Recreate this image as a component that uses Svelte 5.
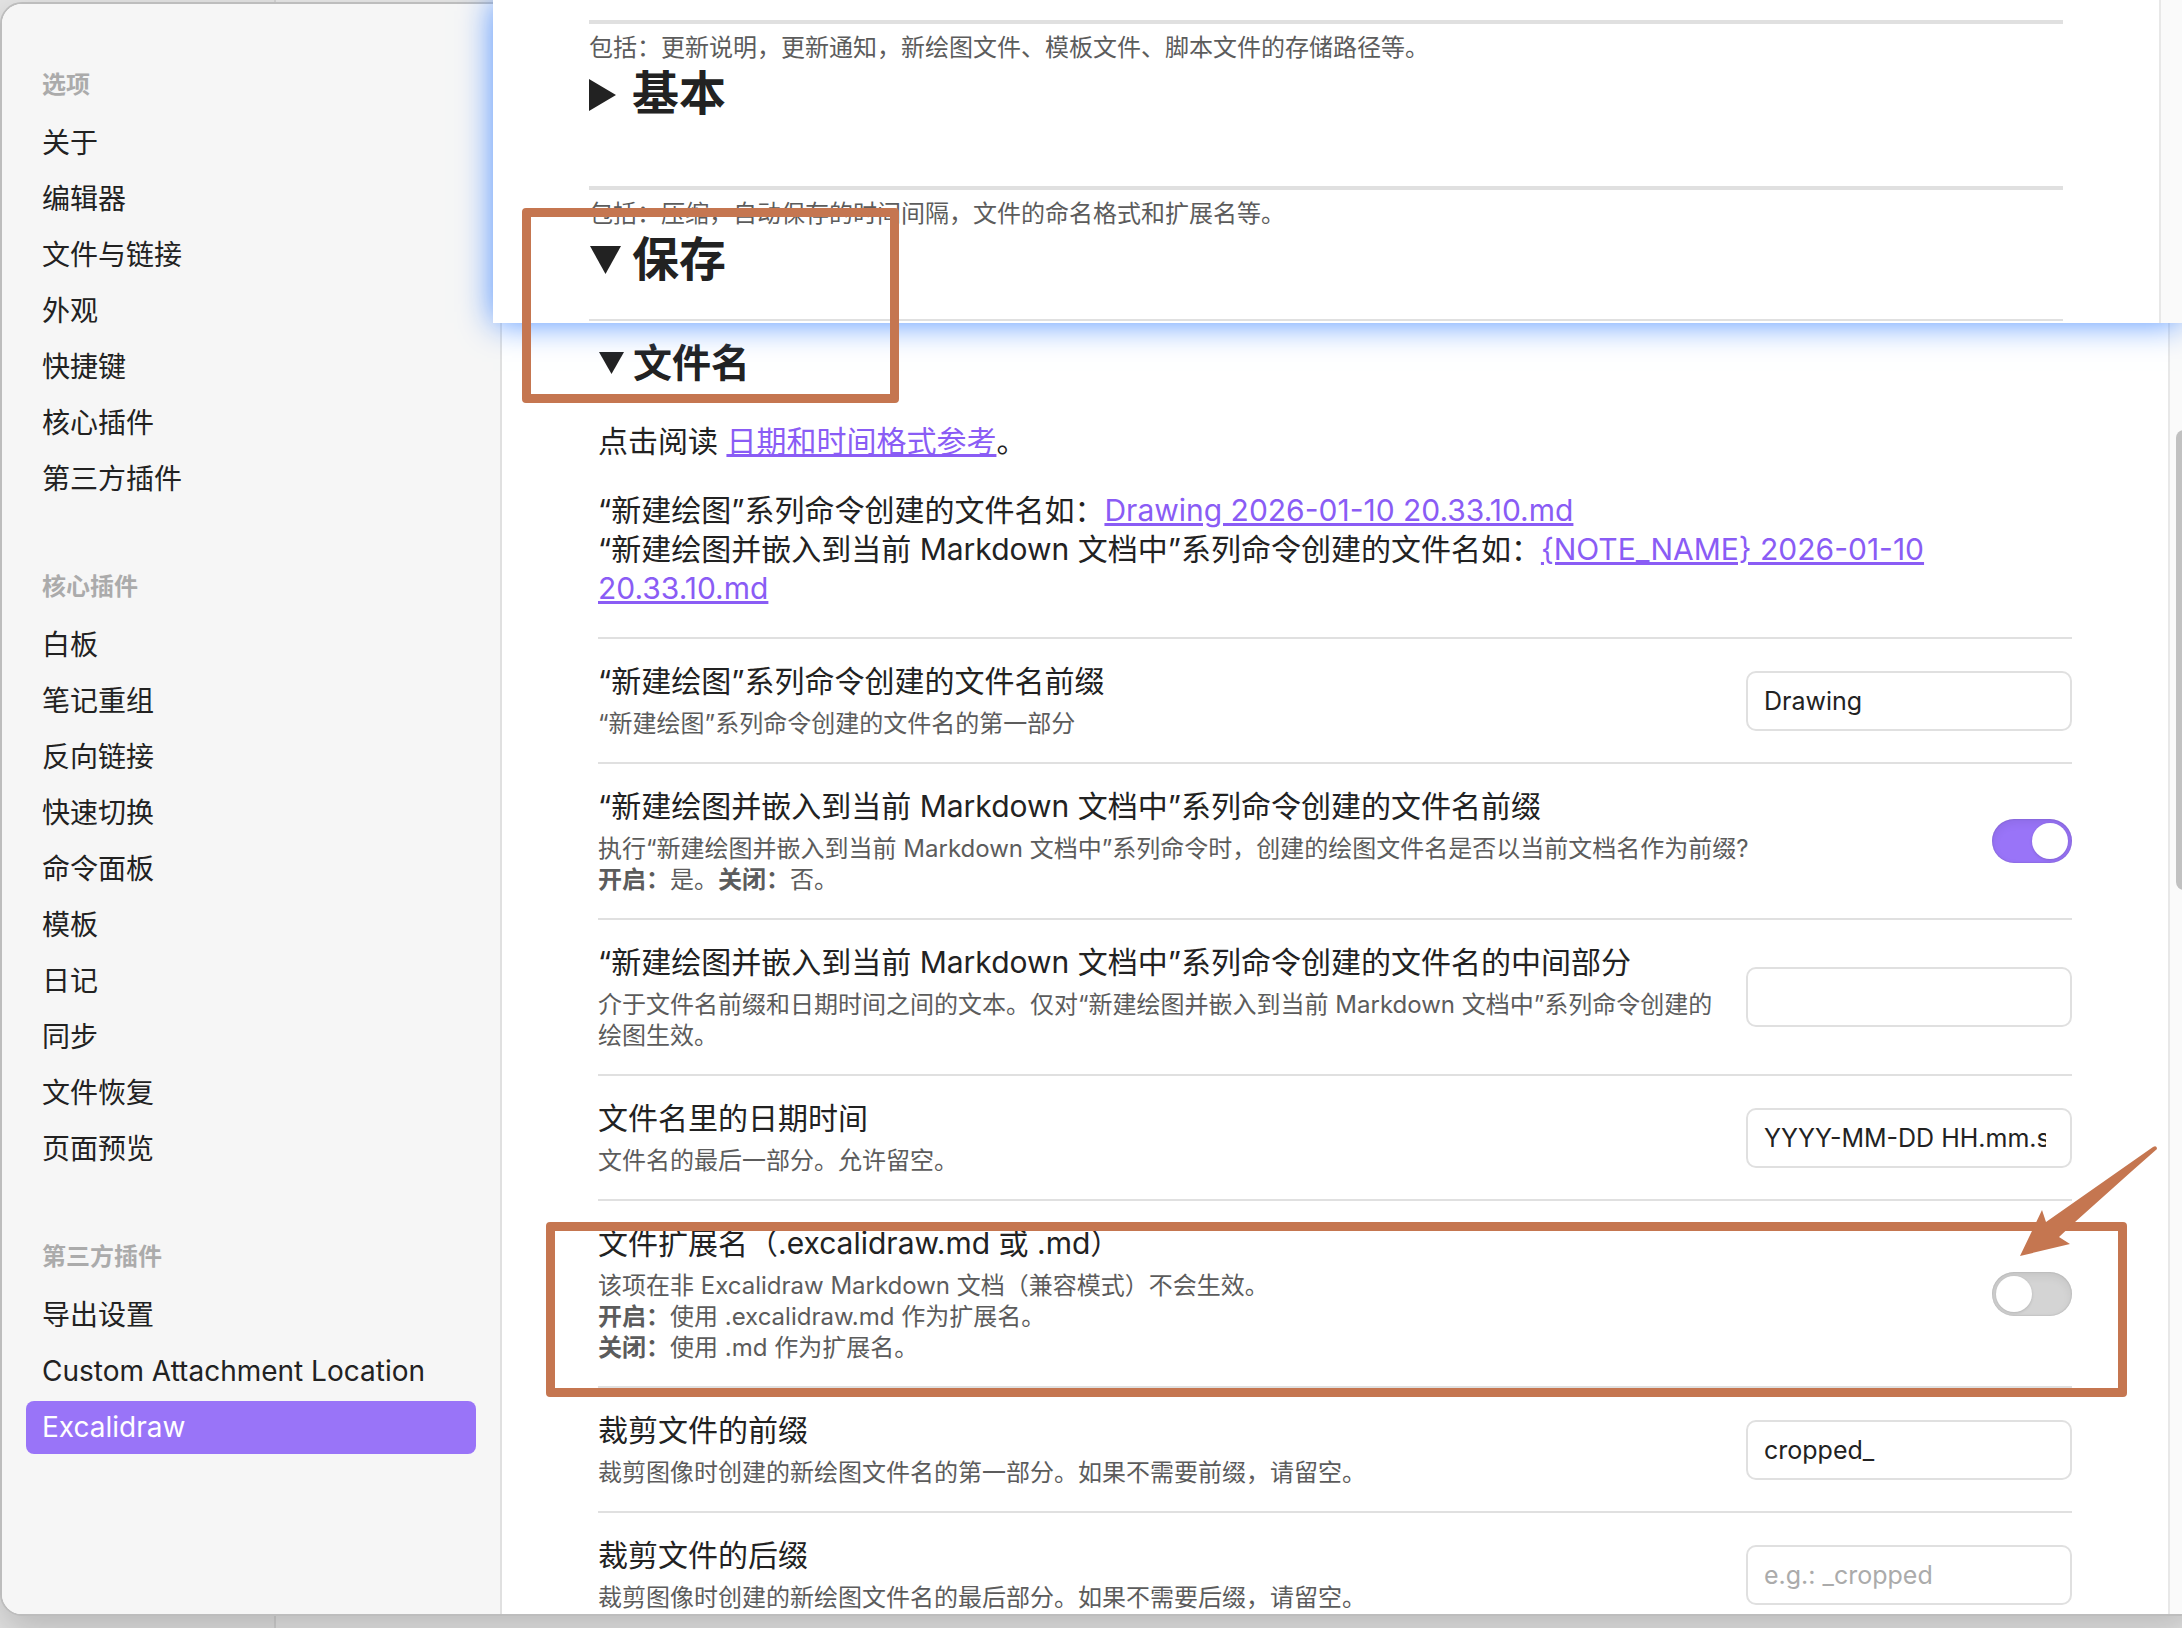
<script>
  const groups = [
    {
      title: '选项',
      items: ['关于', '编辑器', '文件与链接', '外观', '快捷键', '核心插件', '第三方插件']
    },
    {
      title: '核心插件',
      items: ['白板', '笔记重组', '反向链接', '快速切换', '命令面板', '模板', '日记', '同步', '文件恢复', '页面预览']
    },
    {
      title: '第三方插件',
      items: ['导出设置', 'Custom Attachment Location', 'Excalidraw']
    }
  ];

  let active = $state('Excalidraw');

  let settings = $state([
    {
      id: 'prefix',
      name: '“新建绘图”系列命令创建的文件名前缀',
      desc: '“新建绘图”系列命令创建的文件名的第一部分',
      type: 'text',
      value: 'Drawing'
    },
    {
      id: 'embed-prefix',
      name: '“新建绘图并嵌入到当前 Markdown 文档中”系列命令创建的文件名前缀',
      desc: '执行“新建绘图并嵌入到当前 Markdown 文档中”系列命令时，创建的绘图文件名是否以当前文档名作为前缀?<br><b>开启：</b>是。<b>关闭：</b>否。',
      type: 'toggle',
      value: true
    },
    {
      id: 'embed-middle',
      name: '“新建绘图并嵌入到当前 Markdown 文档中”系列命令创建的文件名的中间部分',
      desc: '介于文件名前缀和日期时间之间的文本。仅对“新建绘图并嵌入到当前 Markdown 文档中”系列命令创建的绘图生效。',
      type: 'text',
      value: ''
    },
    {
      id: 'datetime',
      name: '文件名里的日期时间',
      desc: '文件名的最后一部分。允许留空。',
      type: 'text',
      value: 'YYYY-MM-DD HH.mm.ss'
    },
    {
      id: 'extension',
      name: '文件扩展名（.excalidraw.md 或 .md）',
      desc: '该项在非 Excalidraw Markdown 文档（兼容模式）不会生效。<br><b>开启：</b>使用 .excalidraw.md 作为扩展名。<br><b>关闭：</b>使用 .md 作为扩展名。',
      type: 'toggle',
      value: false
    },
    {
      id: 'crop-prefix',
      name: '裁剪文件的前缀',
      desc: '裁剪图像时创建的新绘图文件名的第一部分。如果不需要前缀，请留空。',
      type: 'text',
      value: 'cropped_'
    },
    {
      id: 'crop-suffix',
      name: '裁剪文件的后缀',
      desc: '裁剪图像时创建的新绘图文件名的最后部分。如果不需要后缀，请留空。',
      type: 'text',
      value: '',
      placeholder: 'e.g.: _cropped'
    }
  ]);
</script>

<div class="desktop">
  <div class="modal">
    <nav class="sidebar">
      {#each groups as group}
        <section class="nav-group">
          <h2 class="nav-title">{group.title}</h2>
          {#each group.items as item}
            <button
              type="button"
              class="nav-item"
              class:active={active === item}
              onclick={() => (active = item)}
            >{item}</button>
          {/each}
        </section>
      {/each}
    </nav>

    <main class="content">
      <details open>
        <summary>
          <svg class="marker" width="35" height="24" viewBox="0 0 35 24" aria-hidden="true">
            <path d="M1 1h25L13.500 23z" fill="currentColor" />
          </svg>
          <h3>文件名</h3>
        </summary>

        <div class="intro">
          <p>点击阅读 <a href="#format">日期和时间格式参考</a>。</p>
          <p>
            “新建绘图”系列命令创建的文件名如：<a href="#drawing">Drawing 2026-01-10 20.33.10.md</a><br>
            “新建绘图并嵌入到当前 Markdown 文档中”系列命令创建的文件名如：<a href="#note">{'{NOTE_NAME}'} 2026-01-10 20.33.10.md</a>
          </p>
        </div>

        {#each settings as setting}
          <div class="setting">
            <div class="info">
              <label class="name" for={setting.id}>{setting.name}</label>
              <div class="desc">{@html setting.desc}</div>
            </div>
            {#if setting.type === 'toggle'}
              <input id={setting.id} class="toggle" type="checkbox" bind:checked={setting.value} />
            {:else}
              <input
                id={setting.id}
                class="text"
                type="text"
                bind:value={setting.value}
                placeholder={setting.placeholder ?? ''}
              />
            {/if}
          </div>
        {/each}
      </details>
    </main>

    <div class="gutter"><div class="thumb"></div></div>
  </div>

  <!-- Floating panel with the parent sections -->
  <div class="float">
    <div class="float-body">
      <section class="float-section">
        <p>包括：更新说明，更新通知，新绘图文件、模板文件、脚本文件的存储路径等。</p>
        <details>
          <summary>
            <svg class="marker" width="43" height="36" viewBox="0 0 43 36" aria-hidden="true">
              <path d="M0 4l27 16L0 36z" fill="currentColor" />
            </svg>
            <h1>基本</h1>
          </summary>
        </details>
      </section>
      <section class="float-section">
        <p>包括：压缩，自动保存的时间间隔，文件的命名格式和扩展名等。</p>
        <details open>
          <summary>
            <svg class="marker" width="43" height="36" viewBox="0 0 43 36" aria-hidden="true">
              <path d="M1 5h31L16.500 33z" fill="currentColor" />
            </svg>
            <h1>保存</h1>
          </summary>
        </details>
      </section>
    </div>
    <div class="float-gutter"></div>
  </div>

  <!-- Annotations -->
  <div class="mark mark-heading"></div>
  <div class="mark mark-extension"></div>
  <svg class="arrow" width="140" height="112" viewBox="0 0 140 112" aria-hidden="true">
    <path d="M1 111L23 65l4 12L134 2q4-2 4 2L113 26 56 77 40 92l11 7z" fill="#c57650" />
  </svg>
</div>

<style>
  :global(body) {
    margin: 0;
    overflow: hidden;
    background: #e6e6e6;
  }
  .desktop {
    position: relative;
    height: 100vh;
    overflow: hidden;
    box-sizing: border-box;
    padding: 2px 0 12px 0;
    background: linear-gradient(90deg, #e4e4e4 274px, #d4d4d4 274px, #d4d4d4 276px, #e8e8e8 276px);
    color: #222;
    font-family: Inter, "Noto Sans CJK SC", sans-serif;
    font-size: 30px;
    line-height: 39px;
  }
  .modal {
    display: flex;
    height: 100%;
    box-sizing: border-box;
    margin: 0 -18px 0 0;
    border: 2px solid #bdbdbd;
    border-radius: 22px;
    background: #fff;
    overflow: hidden;
    box-shadow: 0 16px 40px rgba(0, 0, 0, 0.2);
  }

  /* Sidebar */
  .sidebar {
    flex: none;
    width: 450px;
    padding: 62px 24px 0;
    border-right: 2px solid #e0e0e0;
    background: #f6f6f6;
  }
  .nav-group {
    display: flex;
    flex-direction: column;
    gap: 3px;
    margin-bottom: 62px;
  }
  .nav-title {
    margin: 0 0 11px;
    padding: 0 16px;
    color: #ababab;
    font-size: 24px;
    font-weight: 600;
    line-height: 37px;
  }
  .nav-item {
    padding: 8px 16px;
    border: 0;
    border-radius: 8px;
    background: none;
    color: #222;
    font: inherit;
    font-size: 28px;
    line-height: 37px;
    text-align: left;
  }
  .nav-item.active {
    background: #9974f8;
    color: #fff;
  }

  /* Settings */
  .content {
    flex: 1;
    min-width: 0;
    padding: 334px 96px 0;
  }
  summary {
    display: flex;
    align-items: center;
    list-style: none;
  }
  .marker {
    flex: none;
  }
  h1, h3 {
    margin: 0;
    font-weight: 600;
  }
  h1 {
    font-size: 47px;
    line-height: 60px;
  }
  h3 {
    font-size: 39px;
    line-height: 50px;
  }
  .intro {
    padding: 34px 0 29px;
  }
  .intro p {
    margin: 0 0 30px;
  }
  .intro p:last-child {
    margin: 0;
  }
  a {
    color: #8a5cf5;
    text-decoration-thickness: 3px;
  }
  .setting {
    display: flex;
    align-items: center;
    gap: 28px;
    padding: 23px 0;
    border-top: 2px solid #e0e0e0;
  }
  .info {
    flex: 1;
    min-width: 0;
  }
  .name {
    display: block;
  }
  .desc {
    margin-top: 7px;
    color: #5c5c5c;
    font-size: 24px;
    line-height: 31px;
  }
  .text {
    flex: none;
    box-sizing: border-box;
    width: 326px;
    height: 60px;
    padding: 0 24px 0 16px;
    border: 2px solid #e0e0e0;
    border-radius: 10px;
    background: #fff;
    color: #222;
    font: inherit;
    font-size: 25px;
    outline: none;
  }
  .text::placeholder {
    color: #ababab;
  }
  .toggle {
    appearance: none;
    flex: none;
    display: flex;
    box-sizing: border-box;
    width: 80px;
    height: 44px;
    margin: 0;
    padding: 4px;
    border-radius: 22px;
    background: #d4d4d4;
    box-shadow: inset 0 4px 10px rgba(0, 0, 0, 0.07), inset 0 0 2px rgba(0, 0, 0, 0.2);
  }
  .toggle::before {
    content: '';
    width: 36px;
    height: 36px;
    border-radius: 50%;
    background: #fff;
    box-shadow: 0 1px 3px rgba(0, 0, 0, 0.15);
  }
  .toggle:checked {
    justify-content: flex-end;
    background: #9974f8;
  }

  .gutter {
    flex: none;
    width: 22px;
    padding: 426px 0 0 6px;
    border-left: 2px solid #e8e8e8;
    background: #fafafa;
  }
  .thumb {
    height: 460px;
    border-radius: 8px;
    background: #c1c1c1;
  }

  /* Floating panel */
  .float {
    position: absolute;
    top: 0;
    left: 493px;
    right: 0;
    display: flex;
    background: #fff;
    box-shadow: 0 0 32px rgb(80, 145, 255);
  }
  .float-body {
    flex: 1;
    margin-bottom: 2px;
    padding: 20px 96px 0;
  }
  .float-section {
    margin-bottom: 63px;
    border-top: 4px solid #e0e0e0;
  }
  .float-section:last-child {
    margin-bottom: 0;
    padding-bottom: 30px;
    border-bottom: 2px solid #e0e0e0;
  }
  .float p {
    margin: 8px 0 0;
    color: #5c5c5c;
    font-size: 24px;
    line-height: 31px;
  }
  .float-gutter {
    width: 21px;
    border-left: 2px solid #e8e8e8;
    background: #fafafa;
  }

  /* Annotations */
  .mark {
    position: absolute;
    box-sizing: border-box;
    border: 9px solid #c57650;
    border-radius: 4px;
    pointer-events: none;
  }
  .mark-heading {
    top: 208px;
    left: 522px;
    width: 377px;
    height: 195px;
  }
  .mark-extension {
    top: 1222px;
    left: 546px;
    right: 55px;
    height: 175px;
  }
  .arrow {
    position: absolute;
    top: 1145px;
    right: 23px;
    pointer-events: none;
  }
</style>
